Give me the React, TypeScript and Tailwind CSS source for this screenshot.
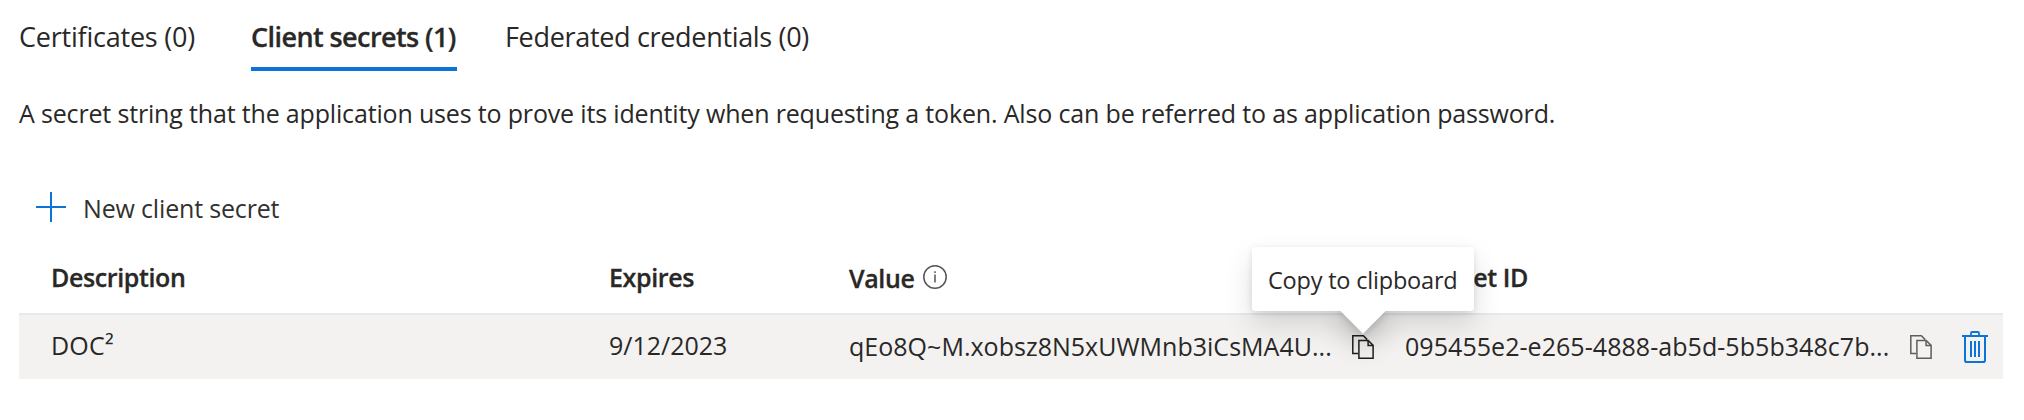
import type { ReactNode } from 'react';

function CopyIcon({ className }: { className: string }) {
  return (
    <svg width="22" height="24" viewBox="0 0 22 24" fill="none" stroke="currentColor" strokeWidth="1.5" className={className}>
      <path d="M6 18.6H.8V.8H11.4L15.2 4.6" />
      <path d="M6.9 5.5H16.2L21.1 10.4V23.2H6.9Z" />
      <path d="M16.1 5.5V10.4H21.1" />
    </svg>
  );
}

function TrashIcon() {
  return (
    <svg width="26" height="32" viewBox="0 0 26 32" fill="none" stroke="#0b74d6" strokeWidth="2" className="shrink-0">
      <path d="M0 5H26" />
      <path d="M9 5V2Q9 1 10 1H16Q17 1 17 2V5" strokeWidth="1.8" />
      <path d="M3 5V29.2Q3 31 4.8 31H21.2Q23 31 23 29.2V5" />
      <path d="M9 10V26M13 10V26M17 10V26" />
    </svg>
  );
}

function InfoIcon() {
  return (
    <svg width="24" height="24" viewBox="0 0 24 24" fill="none" stroke="#555452" className="shrink-0">
      <circle cx="12" cy="12" r="11.2" strokeWidth="1.5" />
      <path d="M12 9.5V17.5M12 6.2V8" strokeWidth="1.5" />
    </svg>
  );
}

function HeaderCell({ children }: { children: ReactNode }) {
  return <div className="flex items-center font-semibold [-webkit-text-stroke:0.3px_#292827]">{children}</div>;
}

function Tooltip({ text }: { text: string }) {
  return (
    <div className="absolute left-1/2 bottom-[48px] z-10 h-[64px] w-[222px] -translate-x-1/2">
      <div className="absolute inset-0 rounded-[4px] shadow-[0_13px_29px_rgba(0,0,0,0.132),0_2px_7px_rgba(0,0,0,0.108)]" />
      <div className="absolute left-[95px] top-[48px] size-[32px] rotate-45 bg-white shadow-[9px_9px_29px_rgba(0,0,0,0.24),2px_2px_7px_rgba(0,0,0,0.12)]" />
      <div className="relative flex h-full items-center rounded-[4px] bg-white pl-[16px] pt-px text-[23.5px] tracking-[-0.2px] whitespace-nowrap">{text}</div>
    </div>
  );
}

export default function App() {
  return (
    <div className="h-[420px] w-[2024px] overflow-hidden bg-white pl-[19px] font-['Open_Sans','Noto_Sans',sans-serif] text-[25px] leading-9 text-[#292827]">
      <div className="flex h-[71px] pt-5 text-[27px] leading-[33px] whitespace-nowrap">
        <div className="w-[232px] tracking-[-0.22px]">Certificates (0)</div>
        <div className="mr-[48px] w-[206px] border-b-4 border-[#0b74d6] font-semibold tracking-[-0.58px] [-webkit-text-stroke:0.3px_#292827]">Client secrets (1)</div>
        <div className="tracking-[-0.32px]">Federated credentials (0)</div>
      </div>
      <p className="mt-6 whitespace-nowrap tracking-[-0.165px]">
        A secret string that the application uses to prove its identity when requesting a token. Also can be referred to as application password.
      </p>
      <div className="mt-[59px] flex h-9 gap-[17px] pl-[17px] tracking-[-0.17px] text-[#323130]">
        <svg width="30" height="30" viewBox="0 0 30 30" stroke="#0b74d6" strokeWidth="2" className="mt-[2px]">
          <path d="M15 0V30M0 15H30" />
        </svg>
        New client secret
      </div>
      <div className="mt-[15px] w-[1984px]">
        <div className="grid h-[74px] grid-cols-[558px_240px_555px_1fr] border-b-2 border-[#eae9e8] pl-[32px] tracking-[-0.38px]">
          <HeaderCell>Description</HeaderCell>
          <HeaderCell>Expires</HeaderCell>
          <HeaderCell>
            <span className="mr-[8px] w-[66px] pt-[2px]">Value</span>
            <InfoIcon />
          </HeaderCell>
          <HeaderCell>
            <span className="w-[124px] text-right">Secret ID</span>
          </HeaderCell>
        </div>
        <div className="grid h-[64px] grid-cols-[558px_240px_555px_1fr] items-center bg-[#f3f2f1] pl-[32px]">
          <div className="pb-[5px] tracking-[0.2px]">DOC²</div>
          <div className="pb-[5px]">9/12/2023</div>
          <div className="flex items-center">
            <span className="w-[503px] pb-[3px] tracking-[0.02px]">qEo8Q~M.xobsz8N5xUWMnb3iCsMA4U...</span>
            <div className="relative">
              <CopyIcon className="text-[#201f1e]" />
              <Tooltip text="Copy to clipboard" />
            </div>
          </div>
          <div className="flex items-center">
            <span className="w-[506px] pb-[3px] pl-px tracking-[0.05px]">095455e2-e265-4888-ab5d-5b5b348c7b...</span>
            <CopyIcon className="mr-[30px] text-[#605e5c]" />
            <TrashIcon />
          </div>
        </div>
      </div>
    </div>
  );
}
